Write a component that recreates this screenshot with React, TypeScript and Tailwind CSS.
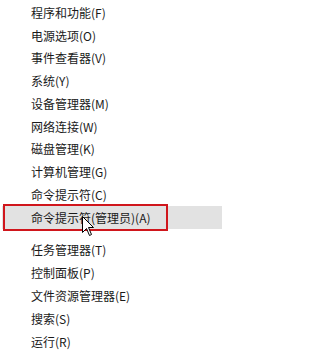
import React from "react";

const group1 = [
  "程序和功能(F)",
  "电源选项(O)",
  "事件查看器(V)",
  "系统(Y)",
  "设备管理器(M)",
  "网络连接(W)",
  "磁盘管理(K)",
  "计算机管理(G)",
  "命令提示符(C)",
  "命令提示符(管理员)(A)",
];

const group2 = [
  "任务管理器(T)",
  "控制面板(P)",
  "文件资源管理器(E)",
  "搜索(S)",
  "运行(R)",
];

const font = {
  fontFamily: '"Noto Sans CJK SC", "Noto Sans", sans-serif',
};

export default function App() {
  return (
    <div
      className="relative w-[225px] h-[355px] bg-white overflow-hidden text-[12px] text-[#1a1a1a]"
      style={font}
    >
      <div className="flex flex-col pt-[1.6px]">
        {group1.map((t, i) => (
          <div
            key={t}
            className={
              "flex items-center h-[22.75px] ml-[2px] mr-[3px] pl-[29px] leading-none whitespace-nowrap " +
              (i === 9 ? "bg-[#e2e2e2]" : "")
            }
          >
            {t}
          </div>
        ))}
      </div>
      <div className="flex flex-col mt-[9px]">
        {group2.map((t) => (
          <div
            key={t}
            className="flex items-center h-[23px] ml-[2px] mr-[3px] pl-[29px] leading-none whitespace-nowrap"
          >
            {t}
          </div>
        ))}
      </div>
      <div className="absolute left-[3px] top-[204px] w-[165px] h-[27px] border-2 border-[#d0161c] pointer-events-none" />
      <svg
        className="absolute left-[82px] top-[216px]"
        width="13"
        height="21"
        viewBox="0 0 13 21"
      >
        <path
          d="M0.5 0.5 L0.5 16.5 L4.5 12.5 L7.5 19.5 L9.5 18.5 L6.5 11.5 L11.5 11.5 Z"
          fill="#ffffff"
          stroke="#000000"
          strokeWidth="1"
          strokeLinejoin="miter"
        />
      </svg>
    </div>
  );
}
